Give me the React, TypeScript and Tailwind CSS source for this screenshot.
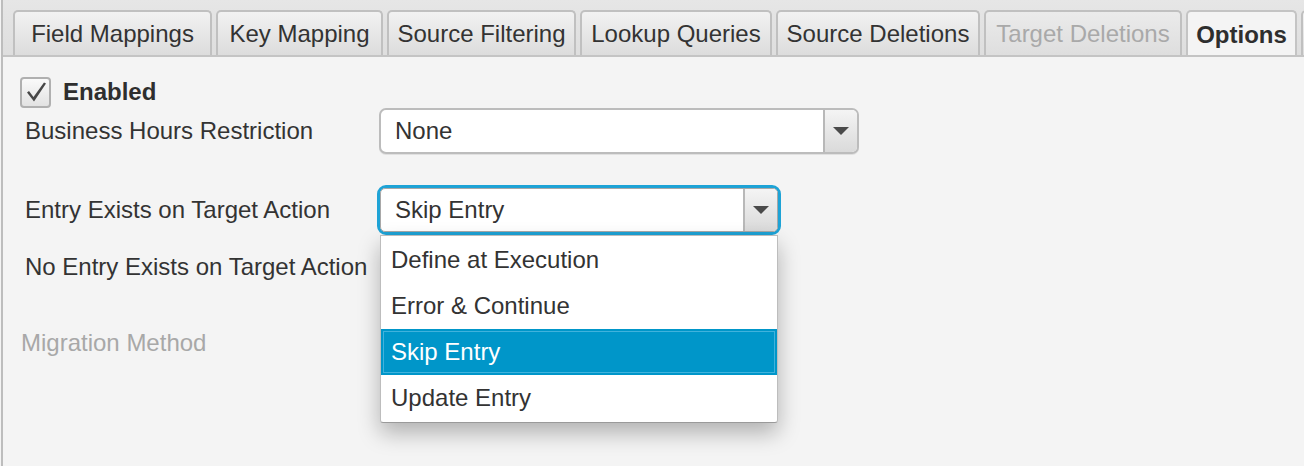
const tabs = [
    { label: "Field Mappings", width: "w-[199px]" },
    { label: "Key Mapping", width: "w-[167px]" },
    { label: "Source Filtering", width: "w-[189px]" },
    { label: "Lookup Queries", width: "w-[192px]" },
    { label: "Source Deletions", width: "w-[204px]" },
    { label: "Target Deletions", width: "w-[198px]", disabled: true },
    { label: "Options", width: "w-[111px]", selected: true },
];

const options = ["Define at Execution", "Error & Continue", "Skip Entry", "Update Entry"];

const TabStrip = (): JSX.Element => {
    return (
        <div className="h-[57px] shrink-0 bg-gradient-to-b from-[#e6e6e6] to-[#dedede] border-b-2 border-[#c4c4c4] flex items-end pl-[10px] gap-[4px] overflow-hidden">
            {tabs.map((tab) => {
                if (tab.selected) {
                    return (
                        <div
                            key={tab.label}
                            className={`${tab.width} shrink-0 h-[47px] -mb-[2px] rounded-t-[5px] border-2 border-b-0 border-[#c4c4c4] bg-[#f4f4f4] flex items-center justify-center text-[24px] font-bold text-[#2e2e2e]`}
                        >
                            {tab.label}
                        </div>
                    );
                }
                return (
                    <div
                        key={tab.label}
                        className={`${tab.width} shrink-0 h-[45px] rounded-t-[5px] border-2 border-b-0 border-[#c0c0c0] bg-gradient-to-b flex items-center justify-center text-[24px] ${tab.disabled ? "text-[#a9a9a9] from-[#ebebeb] to-[#dedede]" : "text-[#333333] from-[#f2f2f2] to-[#dcdcdc]"}`}
                    >
                        {tab.label}
                    </div>
                );
            })}
            <div className="w-[60px] shrink-0 h-[45px] rounded-t-[5px] border-2 border-b-0 border-[#c0c0c0] bg-gradient-to-b from-[#f2f2f2] to-[#dcdcdc]" />
        </div>
    );
};

const ArrowButton = (): JSX.Element => {
    return (
        <div className="w-[34px] self-stretch border-l-2 border-[#b8b8b8] bg-gradient-to-b from-[#f4f4f4] to-[#dadada] flex items-center justify-center">
            <div className="w-0 h-0 border-l-[8px] border-r-[8px] border-t-[8px] border-l-transparent border-r-transparent border-t-[#4a4a4a]" />
        </div>
    );
};

const SelectBox = ({ value, width }: { value: string; width: string }): JSX.Element => {
    return (
        <div className={`${width} h-[46px] rounded-[7px] border-2 border-[#bcbcbc] bg-white flex items-stretch overflow-hidden shadow-[0_1px_0_#e0e0e0]`}>
            <div className="flex-1 flex items-center pl-[14px] text-[24px] text-[#333333]">{value}</div>
            <ArrowButton />
        </div>
    );
};

const FocusedSelect = (): JSX.Element => {
    return (
        <div className="relative">
            <div className="w-[404px] h-[50px] rounded-[9px] border-[3px] border-[#1ea3d6] flex">
                <div className="flex-1 rounded-[5px] border border-[#a8a8a8] bg-white flex items-stretch overflow-hidden">
                    <div className="flex-1 flex items-center pl-[14px] text-[24px] text-[#333333]">Skip Entry</div>
                    <ArrowButton />
                </div>
            </div>
            <div className="absolute left-[3px] top-[50px] w-[398px] bg-white border border-[#bdbdbd] border-b-[#9a9a9a] rounded-b-[3px] py-[1px] shadow-[0_10px_22px_rgba(0,0,0,0.28)] z-10">
                {options.map((option) => (
                    <div
                        key={option}
                        className={
                            option === "Skip Entry"
                                ? "h-[46px] flex items-center pl-[10px] text-[24px] text-white bg-[#0096c9] shadow-[inset_0_0_0_2px_#0096c9,inset_0_0_0_3px_#40b2dc]"
                                : "h-[46px] flex items-center pl-[10px] text-[24px] text-[#333333]"
                        }
                    >
                        {option}
                    </div>
                ))}
            </div>
        </div>
    );
};

const CheckMark = (): JSX.Element => {
    return (
        <svg width="24" height="24" viewBox="0 0 24 24">
            <path d="M3 12.5 L5 11 L9.5 17 L20 2.5 L22 3.5 L10 21.5 Z" fill="#474747" />
        </svg>
    );
};

const OptionsForm = (): JSX.Element => {
    return (
        <div className="flex flex-col pl-[17px] pt-[20px]">
            <div className="flex items-center gap-[12px] h-[30px]">
                <div className="w-[31px] h-[31px] rounded-[4px] border-2 border-[#b0b0b0] bg-gradient-to-b from-[#fafafa] to-[#e2e2e2] flex items-center justify-center">
                    <CheckMark />
                </div>
                <div className="text-[24px] font-bold text-[#2e2e2e]">Enabled</div>
            </div>
            <div className="flex items-center mt-[1px] h-[46px]">
                <div className="w-[359px] pl-[5px] text-[24px] text-[#333333]">Business Hours Restriction</div>
                <SelectBox value="None" width="w-[480px]" />
            </div>
            <div className="flex items-center mt-[31px] h-[50px]">
                <div className="w-[357px] pl-[5px] text-[24px] text-[#333333]">Entry Exists on Target Action</div>
                <FocusedSelect />
            </div>
            <div className="flex items-center mt-[9px] h-[46px]">
                <div className="pl-[5px] text-[24px] text-[#333333]">No Entry Exists on Target Action</div>
            </div>
            <div className="flex items-center mt-[33px] h-[40px]">
                <div className="pl-[1px] text-[24px] text-[#a8a8a8]">Migration Method</div>
            </div>
        </div>
    );
};

export default function App(): JSX.Element {
    return (
        <div className="w-[1304px] h-[466px] overflow-hidden bg-[#f4f4f4] font-['Liberation_Sans',Helvetica,Arial,sans-serif]">
            <div className="h-full ml-[1px] border-l-2 border-[#bdbdbd] flex flex-col">
                <TabStrip />
                <OptionsForm />
            </div>
        </div>
    );
}
